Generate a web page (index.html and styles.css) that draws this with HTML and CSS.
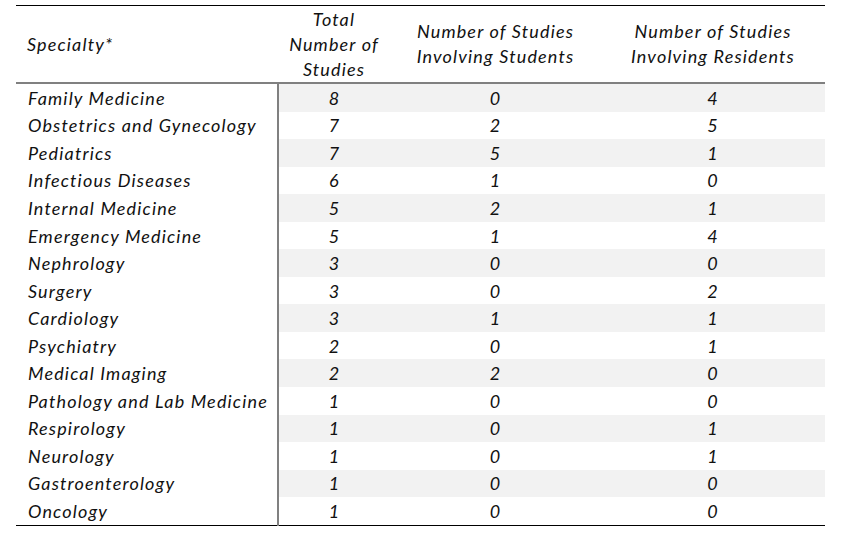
FILE: index.html
```html
<!DOCTYPE html>
<html>
<head>
<meta charset="utf-8">
<link rel="stylesheet" href="styles.css">
</head>
<body>
<table class="data">
  <colgroup>
    <col class="c1"><col class="c2"><col class="c3"><col class="c4">
  </colgroup>
  <thead>
    <tr>
      <th class="spec">Specialty*</th>
      <th>Total<br>Number of<br>Studies</th>
      <th>Number of Studies<br>Involving Students</th>
      <th>Number of Studies<br>Involving Residents</th>
    </tr>
  </thead>
  <tbody>
    <tr class="alt"><td class="spec">Family Medicine</td><td>8</td><td>0</td><td>4</td></tr>
    <tr><td class="spec">Obstetrics and Gynecology</td><td>7</td><td>2</td><td>5</td></tr>
    <tr class="alt"><td class="spec">Pediatrics</td><td>7</td><td>5</td><td>1</td></tr>
    <tr><td class="spec">Infectious Diseases</td><td>6</td><td>1</td><td>0</td></tr>
    <tr class="alt"><td class="spec">Internal Medicine</td><td>5</td><td>2</td><td>1</td></tr>
    <tr><td class="spec">Emergency Medicine</td><td>5</td><td>1</td><td>4</td></tr>
    <tr class="alt"><td class="spec">Nephrology</td><td>3</td><td>0</td><td>0</td></tr>
    <tr><td class="spec">Surgery</td><td>3</td><td>0</td><td>2</td></tr>
    <tr class="alt"><td class="spec">Cardiology</td><td>3</td><td>1</td><td>1</td></tr>
    <tr><td class="spec">Psychiatry</td><td>2</td><td>0</td><td>1</td></tr>
    <tr class="alt"><td class="spec">Medical Imaging</td><td>2</td><td>2</td><td>0</td></tr>
    <tr><td class="spec">Pathology and Lab Medicine</td><td>1</td><td>0</td><td>0</td></tr>
    <tr class="alt"><td class="spec">Respirology</td><td>1</td><td>0</td><td>1</td></tr>
    <tr><td class="spec">Neurology</td><td>1</td><td>0</td><td>1</td></tr>
    <tr class="alt"><td class="spec">Gastroenterology</td><td>1</td><td>0</td><td>0</td></tr>
    <tr><td class="spec">Oncology</td><td>1</td><td>0</td><td>0</td></tr>
  </tbody>
</table>
</body>
</html>
```
FILE: styles.css
```css
html, body {
  margin: 0;
  padding: 0;
  background: #ffffff;
}
body {
  padding: 5px 0 0 16px;
  font-family: Lato, "Liberation Sans", sans-serif;
  font-style: italic;
  font-size: 18px;
  letter-spacing: 1.15px;
  color: #111111;
}
.data {
  border-collapse: collapse;
  table-layout: fixed;
  width: 809px;
  border-top: 1px solid #000;
  border-bottom: 1px solid #000;
}
.c1 { width: 262px; }
.c2 { width: 112px; }
.c3 { width: 211px; }
.c4 { width: 224px; }
th {
  font-weight: normal;
  text-align: center;
  vertical-align: middle;
  height: 76px;
  padding: 0;
  line-height: 25px;
  border-bottom: 2px solid #808080;
}
th.spec {
  text-align: left;
  padding-left: 11px;
}
td {
  text-align: center;
  vertical-align: middle;
  padding: 0;
  height: 27.56px;
  line-height: 20px;
}
td.spec {
  text-align: left;
  padding-left: 12px;
  border-right: 2px solid #808080;
  background: #ffffff;
  white-space: nowrap;
}
tr.alt td {
  background: #f2f2f2;
}
tr.alt td.spec {
  background: #ffffff;
}
```
